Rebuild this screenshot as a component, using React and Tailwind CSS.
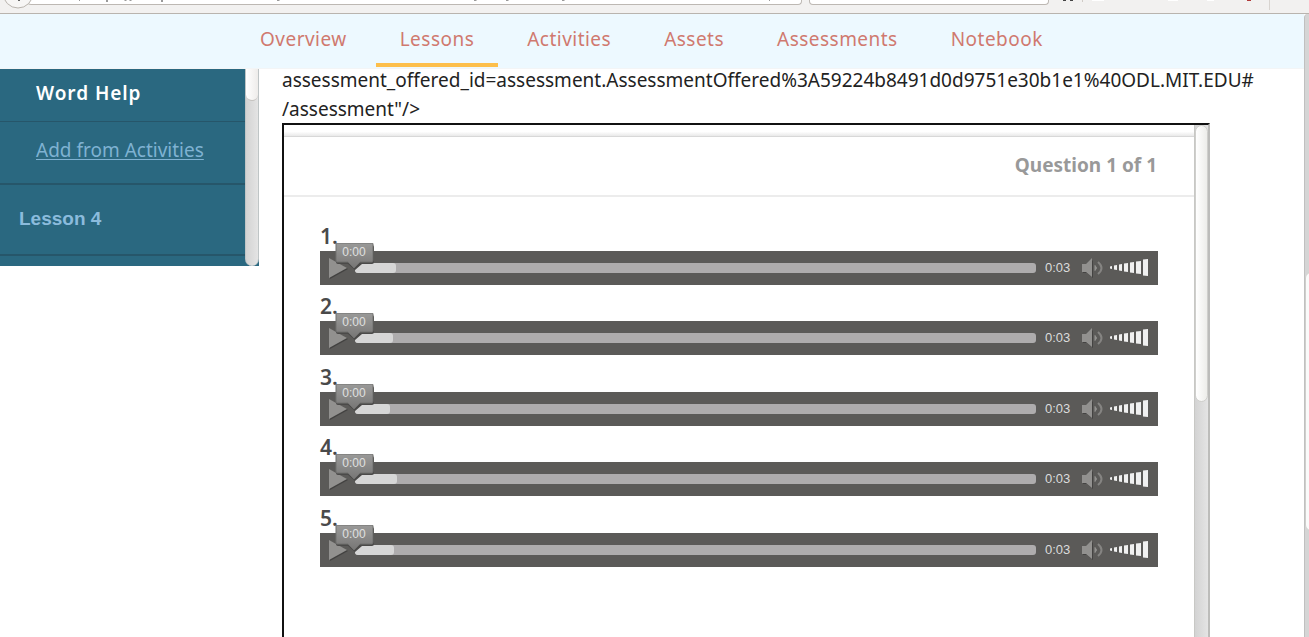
import React from "react";

const tabs = ["Overview", "Lessons", "Activities", "Assets", "Assessments", "Notebook"];

const clips = [
  { id: 1, buffered: 41 },
  { id: 2, buffered: 38 },
  { id: 3, buffered: 35 },
  { id: 4, buffered: 42 },
  { id: 5, buffered: 39 },
];

const volumeBars = [
  [0, 7, 2, 3],
  [4, 6, 3, 5],
  [9, 5, 3, 7],
  [14, 4, 4, 9],
  [20, 3, 4, 11],
  [26, 2, 5, 13],
  [33, 0, 5, 17],
];

function BrowserBar() {
  return (
    <div className="relative flex h-3.5 shrink-0 items-start overflow-hidden border-b border-[#b9b4ae] bg-[#f2f1f0]">
      <div className="ml-[27px] h-[5px] w-[775px] shrink-0 rounded-b-sm border border-t-0 border-[#bdb8b3] bg-white">
        <svg className="block" width="770" height="3" aria-hidden="true">
          <g fill="#9a9a9a">
            <path d="M51 0h1v1h-1zM78 0h2v2h-2zM97 0h2l-1 1h-2zM102 0h2l-1 1h-2zM133 0h2v2h-2zM249 0h3l-1 1h-2zM446 0h3l-1 1h-2zM478 0h3l-1 1h-2zM534 0h3l-1 1h-2zM741 0h1v1h-1z" />
          </g>
        </svg>
      </div>
      <div className="ml-[7px] h-[5px] w-60 shrink-0 rounded-b-sm border border-t-0 border-[#bdb8b3] bg-white" />
      <svg className="ml-3 block" width="230" height="12" aria-hidden="true">
        <path d="M2 0h3v1H2zM9 0h3v1H9z" fill="#444" />
        <path d="M21 0h1v2h-1z" fill="#cfcac5" />
        <path d="M31 0h12v1H31zM107 0h10v1h-10zM146 0h7v1h-7z" fill="#fff" />
        <path d="M186 0h4v1h-4z" fill="#b03a3a" />
        <path d="M208 0h1v10h-1z" fill="#d8d4d0" />
      </svg>
      <svg className="absolute left-0 top-0" width="40" height="10" aria-hidden="true">
        <circle cx="18" cy="-7" r="15" fill="#f7f6f5" stroke="#b9b4ae" />
        <path d="M18 0h2v1h-2z" fill="#666" />
      </svg>
    </div>
  );
}

function Nav() {
  return (
    <nav className="flex h-[55px] shrink-0 border-b border-[#f3f5f6] bg-[#edf9ff] pl-[236px]">
      {tabs.map((tab) => (
        <a
          key={tab}
          href="#"
          className={
            "mr-[5px] h-[53px] border-b-4 px-6 pt-[11px] text-[19px] leading-[29px] tracking-wide text-[#d0796f] " +
            (tab === "Lessons" ? "border-[#fdbf4b]" : "border-transparent")
          }
        >
          {tab}
        </a>
      ))}
    </nav>
  );
}

function Sidebar() {
  return (
    <aside className="flex h-[197px] w-[259px] shrink-0 bg-[#2a6880]">
      <div className="flex-1 overflow-hidden">
        <a href="#" className="block h-[53px] border-b border-[#26566a] pl-9 pt-[10px] text-[19px] font-semibold leading-[29px] tracking-wider text-white">
          Word Help
        </a>
        <div className="h-[63px] border-b-2 border-[#26566a] pl-9 pt-[14px]">
          <a href="#" className="text-[19px] leading-[29px] text-[#7fb2d2] underline underline-offset-2">
            Add from Activities
          </a>
        </div>
        <div className="h-[71px] border-b-2 border-[#26566a] pl-[19px] pt-[19px] font-['Liberation_Sans',sans-serif] text-[19px] font-bold leading-[29px] text-[#8bbbdc]">
          Lesson 4
        </div>
      </div>
      <div className="w-[14px] overflow-hidden rounded-b-full border-x border-[#bfc5c6] bg-linear-to-r from-[#d3d3d3] to-[#e4e4e4]">
        <div className="h-8 rounded-b-full border-b border-[#c5c2bf] bg-linear-to-r from-white to-[#eeecea]" />
      </div>
    </aside>
  );
}

function Player({ buffered }) {
  return (
    <div className="relative flex h-[34px] items-center bg-[#5b5a58] font-['Liberation_Sans',sans-serif]">
      <button type="button" aria-label="Play" className="ml-2 w-[27px]">
        <svg className="block" width="20" height="24" aria-hidden="true">
          <path d="M2 3L20 13L2 23z" fill="#434241" />
          <path d="M1 2L19 12L1 22z" fill="#92918f" />
        </svg>
      </button>
      <div className="relative h-[10px] flex-1 rounded-[3px] bg-[#aeacad]">
        <div className="h-full rounded-[3px] bg-[#d6d6d6]" style={{ width: buffered }} />
        <input
          type="range"
          min="0"
          max="3"
          defaultValue="0"
          aria-label="Seek"
          className="absolute inset-0 w-full appearance-none bg-transparent [&::-webkit-slider-thumb]:w-0 [&::-webkit-slider-thumb]:appearance-none"
        />
      </div>
      <div className="absolute -top-2 left-[14px] h-[28px] w-[42px]">
        <svg className="absolute inset-0" width="42" height="28" aria-hidden="true">
          <defs>
            <linearGradient id="tip" x1="0" y1="0" x2="0" y2="1">
              <stop offset="0" stopColor="#9a9a99" />
              <stop offset="1" stopColor="#777675" />
            </linearGradient>
          </defs>
          <path d="M3 2h35q2 0 2 2v15q0 2-2 2H28l-7 6l-7-6H4q-2 0-2-2V4q0-2 1-2z" fill="#4b4a49" />
          <path d="M3 0h35q1 0 1 1v16q0 2-1 2H26l-6 6l-6-6H3q-1 0-1-2V1q0-1 1-1z" fill="url(#tip)" stroke="#70706f" strokeWidth="1" />
        </svg>
        <span className="relative block pr-[2px] text-center text-[12px] leading-[18px] text-[#e0e0e0]">0:00</span>
      </div>
      <span className="ml-[9px] w-[36px] text-[13px] leading-[18px] text-[#dcdcdc]">0:03</span>
      <button type="button" aria-label="Mute" className="w-[29px]">
        <svg className="block" width="24" height="22" aria-hidden="true">
          <path d="M2 9h4l6-6v18l-6-5H2z" fill="#444342" />
          <path d="M1 7h4l6-6v19l-6-5H1z" fill="#92918f" />
          <path d="M14 8.500q3 2.500 0 5z" fill="#92918f" stroke="#92918f" />
          <path d="M17 5q7 6 0 12" fill="none" stroke="#858482" strokeWidth="2" />
        </svg>
      </button>
      <div className="relative mr-[10px] w-[38px]">
        <svg className="block" width="38" height="18" aria-hidden="true">
          {volumeBars.map(([x, y, w, h]) => (
            <path key={x} d={`M${x} ${y + 0.500}L${x + w} ${y}V${y + h}L${x} ${y + h - 0.500}z`} fill="#f0f0f0" />
          ))}
        </svg>
        <input
          type="range"
          min="0"
          max="100"
          defaultValue="100"
          aria-label="Volume"
          className="absolute inset-0 w-full appearance-none bg-transparent [&::-webkit-slider-thumb]:w-0 [&::-webkit-slider-thumb]:appearance-none"
        />
      </div>
    </div>
  );
}

function AssessmentFrame() {
  return (
    <section className="mr-[94px] flex flex-1 border-2 border-b-0 border-[#111] border-r-[#bcbcba]">
      <div className="flex-1">
        <div className="h-3 border-b border-[#d8d8d8] bg-linear-to-b from-white from-60% to-[#e9e9e9]" />
        <header className="h-[60px] border-b-2 border-[#ececec] pr-[37px] pt-[14px] text-right text-[19px] font-bold leading-[29px] text-[#999]">
          Question 1 of 1
        </header>
        <ol className="ml-9 mr-9 mt-[17px] grid h-[353px] auto-rows-fr">
          {clips.map((clip) => (
            <li key={clip.id} className="flex flex-col justify-end">
              <span className="text-[21px] font-semibold leading-[29px] text-[#4a4a4a]">{clip.id}.</span>
              <Player buffered={clip.buffered} />
            </li>
          ))}
        </ol>
      </div>
      <div className="w-[14px] border-l border-[#c8c8c5] bg-linear-to-r from-[#d3d3d3] to-[#e4e4e4]">
        <div className="h-[277px] rounded-full border border-[#cfcfcc] bg-linear-to-r from-white to-[#ededea]" />
      </div>
    </section>
  );
}

export default function App() {
  return (
    <div className="flex h-screen flex-col overflow-hidden bg-white font-['Noto_Sans','Open_Sans',sans-serif]">
      <BrowserBar />
      <div className="flex min-h-0 flex-1">
        <div className="flex min-w-0 flex-1 flex-col">
          <Nav />
          <div className="flex min-h-0 flex-1">
            <Sidebar />
            <main className="ml-[23px] flex min-w-0 flex-1 flex-col">
              <p className="-mt-[3px] h-[57px] text-[19px] leading-[29px] text-[#222]">
                assessment_offered_id=assessment.AssessmentOffered%3A59224b8491d0d9751e30b1e1%40ODL.MIT.EDU#
                <br />
                /assessment"/&gt;
              </p>
              <AssessmentFrame />
            </main>
          </div>
        </div>
        <div className="w-[5px] overflow-hidden rounded-tl border-l border-[#c0c0c0] bg-[#d5d5d5] pt-[258px]">
          <div className="h-[259px] w-3 rounded-full border border-[#cfcfcc] bg-[#fafafa]" />
        </div>
      </div>
    </div>
  );
}
